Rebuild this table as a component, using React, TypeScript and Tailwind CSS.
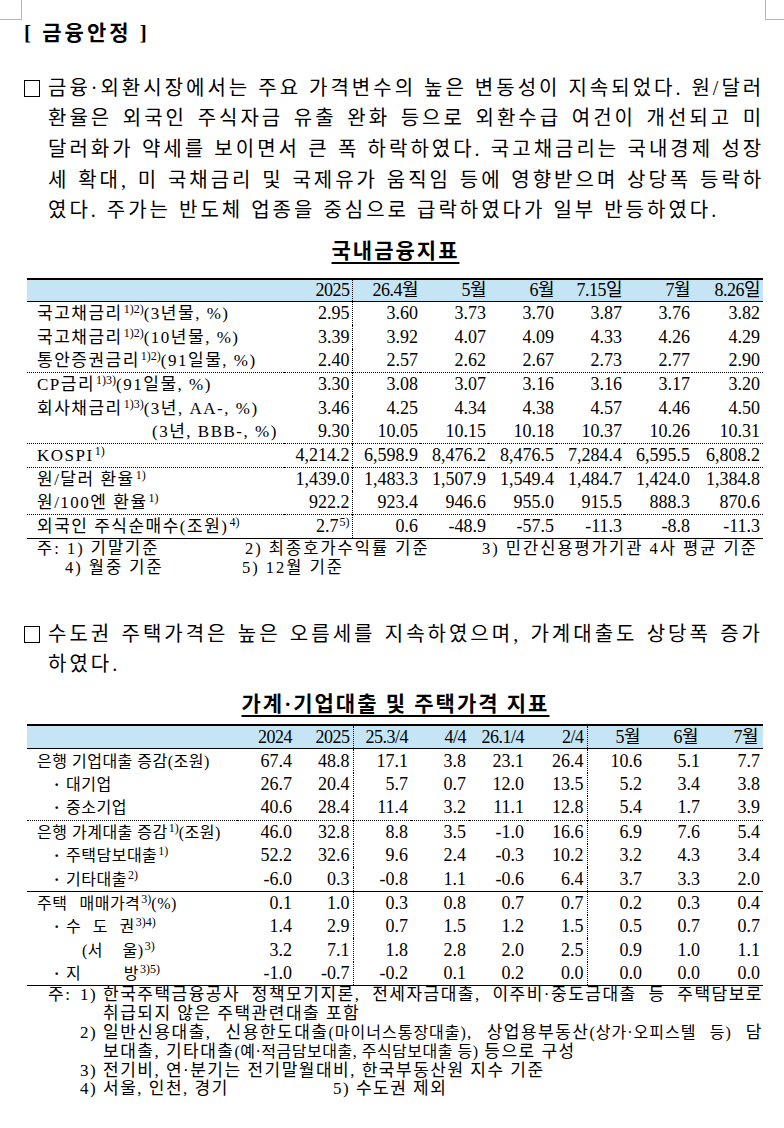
import React from 'react';

const Sup = ({ children }: { children: React.ReactNode }) => (
  <sup className="text-[12px] ml-[1px] tracking-[0px]">{children}</sup>
);

const JLine = ({ children, last }: { children: React.ReactNode; last?: boolean }) => (
  <div className={last ? 'whitespace-nowrap' : 'whitespace-nowrap text-justify [text-align-last:justify]'}>{children}</div>
);

const t1Head = ['2025', '26.4월', '5월', '6월', '7.15일', '7월', '8.26일'];

const t1Rows: { label: React.ReactNode; v: React.ReactNode[]; line?: 'dot' | 'solid' }[] = [
  { label: <>국고채금리<Sup>1)2)</Sup>(3년물, %)</>, v: ['2.95', '3.60', '3.73', '3.70', '3.87', '3.76', '3.82'] },
  { label: <>국고채금리<Sup>1)2)</Sup>(10년물, %)</>, v: ['3.39', '3.92', '4.07', '4.09', '4.33', '4.26', '4.29'] },
  { label: <>통안증권금리<Sup>1)2)</Sup>(91일물, %)</>, v: ['2.40', '2.57', '2.62', '2.67', '2.73', '2.77', '2.90'], line: 'dot' },
  { label: <>CP금리<Sup>1)3)</Sup>(91일물, %)</>, v: ['3.30', '3.08', '3.07', '3.16', '3.16', '3.17', '3.20'] },
  { label: <>회사채금리<Sup>1)3)</Sup>(3년, AA-, %)</>, v: ['3.46', '4.25', '4.34', '4.38', '4.57', '4.46', '4.50'] },
  { label: <span className="pl-[115px]">(3년, BBB-, %)</span>, v: ['9.30', '10.05', '10.15', '10.18', '10.37', '10.26', '10.31'], line: 'dot' },
  { label: <>KOSPI<Sup>1)</Sup></>, v: ['4,214.2', '6,598.9', '8,476.2', '8,476.5', '7,284.4', '6,595.5', '6,808.2'], line: 'dot' },
  { label: <>원/달러 환율<Sup>1)</Sup></>, v: ['1,439.0', '1,483.3', '1,507.9', '1,549.4', '1,484.7', '1,424.0', '1,384.8'] },
  { label: <>원/100엔 환율<Sup>1)</Sup></>, v: ['922.2', '923.4', '946.6', '955.0', '915.5', '888.3', '870.6'], line: 'dot' },
  { label: <>외국인 주식순매수(조원)<Sup>4)</Sup></>, v: [<>2.7<Sup>5)</Sup></>, '0.6', '-48.9', '-57.5', '-11.3', '-8.8', '-11.3'], line: 'solid' },
];

const t2Head = ['2024', '2025', '25.3/4', '4/4', '26.1/4', '2/4', '5월', '6월', '7월'];

const Dot = () => <span className="inline-block w-[12px] font-bold">·</span>;

const t2Rows: { label: React.ReactNode; v: string[]; line?: 'dot' | 'solid' }[] = [
  { label: <>은행 기업대출 증감(조원)</>, v: ['67.4', '48.8', '17.1', '3.8', '23.1', '26.4', '10.6', '5.1', '7.7'] },
  { label: <span className="pl-[17px]"><Dot />대기업</span>, v: ['26.7', '20.4', '5.7', '0.7', '12.0', '13.5', '5.2', '3.4', '3.8'] },
  { label: <span className="pl-[17px]"><Dot />중소기업</span>, v: ['40.6', '28.4', '11.4', '3.2', '11.1', '12.8', '5.4', '1.7', '3.9'], line: 'dot' },
  { label: <>은행 가계대출 증감<Sup>1)</Sup>(조원)</>, v: ['46.0', '32.8', '8.8', '3.5', '-1.0', '16.6', '6.9', '7.6', '5.4'] },
  { label: <span className="pl-[17px]"><Dot />주택담보대출<Sup>1)</Sup></span>, v: ['52.2', '32.6', '9.6', '2.4', '-0.3', '10.2', '3.2', '4.3', '3.4'] },
  { label: <span className="pl-[17px]"><Dot />기타대출<Sup>2)</Sup></span>, v: ['-6.0', '0.3', '-0.8', '1.1', '-0.6', '6.4', '3.7', '3.3', '2.0'], line: 'solid' },
  { label: <>주택<span className="inline-block w-[12px]" />매매가격<Sup>3)</Sup>(%)</>, v: ['0.1', '1.0', '0.3', '0.8', '0.7', '0.7', '0.2', '0.3', '0.4'] },
  { label: <span className="pl-[17px]"><Dot /><span className="tracking-[12px]">수도</span>권<Sup>3)4)</Sup></span>, v: ['1.4', '2.9', '0.7', '1.5', '1.2', '1.5', '0.5', '0.7', '0.7'] },
  { label: <span className="pl-[45px]">(<span className="tracking-[20px]">서</span>울)<Sup>3)</Sup></span>, v: ['3.2', '7.1', '1.8', '2.8', '2.0', '2.5', '0.9', '1.0', '1.1'] },
  { label: <span className="pl-[17px]"><Dot /><span className="tracking-[43px]">지</span>방<Sup>3)5)</Sup></span>, v: ['-1.0', '-0.7', '-0.2', '0.1', '0.2', '0.0', '0.0', '0.0', '0.0'], line: 'solid' },
];

const rowLine = (l?: 'dot' | 'solid') =>
  l === 'dot' ? 'border-b border-dotted border-black' : l === 'solid' ? 'border-b border-solid border-black' : '';

const App: React.FC = () => {
  return (
    <div className="relative w-[784px] h-[1128px] overflow-hidden bg-white text-black font-['Liberation_Serif','Noto_Sans_CJK_KR',serif]">
      {/* page margin marks */}
      <div className="absolute left-0 top-0 w-[22px] h-[20px] border-r border-b border-[#b5b5b5]" />
      <div className="absolute right-0 top-0 w-[19px] h-[20px] border-l border-b border-[#b5b5b5]" />

      <div className="pl-[22px] pr-[21px]">
        <div className="pt-[21px] text-[21px] font-bold leading-[24px] pl-[2px] tracking-[3px]">[ 금융안정 ]</div>

        <div className="mt-[27.6px] flex">
          <div className="w-[26px] pt-[7.5px] shrink-0">
            <div className="ml-[2px] w-[16px] h-[17px] border border-black" />
          </div>
          <div className="flex-1 text-[20px] leading-[30.7px] tracking-[3px]">
            <JLine>금융·외환시장에서는 주요 가격변수의 높은 변동성이 지속되었다. 원/달러</JLine>
            <JLine>환율은 외국인 주식자금 유출 완화 등으로 외환수급 여건이 개선되고 미</JLine>
            <JLine>달러화가 약세를 보이면서 큰 폭 하락하였다. 국고채금리는 국내경제 성장</JLine>
            <JLine>세 확대, 미 국채금리 및 국제유가 움직임 등에 영향받으며 상당폭 등락하</JLine>
            <JLine last>였다. 주가는 반도체 업종을 중심으로 급락하였다가 일부 반등하였다.</JLine>
          </div>
        </div>

        <div className="mt-[12.5px] pl-[6px] text-center text-[21px] font-bold leading-[24px] tracking-[2px]">
          <span className="underline underline-offset-[4px] decoration-[1.5px]">국내금융지표</span>
        </div>

        <table className="mt-[15px] ml-[5px] w-[736px] table-fixed border-collapse">
          <colgroup>
            <col className="w-[257px]" />
            <col className="w-[68px]" />
            <col className="w-[68px]" />
            <col className="w-[68px]" />
            <col className="w-[68px]" />
            <col className="w-[68px]" />
            <col className="w-[68px]" />
            <col className="w-[71px]" />
          </colgroup>
          <thead>
            <tr className="bg-[#c6e5f4] border-t-2 border-b border-solid border-black">
              <td className="h-[23px] p-0" />
              {t1Head.map((h, i) => (
                <td
                  key={h}
                  className={`h-[23px] p-0 pr-[2px] text-right text-[18px] leading-[20px] whitespace-nowrap tracking-[-0.5px] ${i === 0 ? 'border-r border-dotted border-black' : ''} ${i === 6 ? 'pr-[3px]' : ''}`}
                >
                  {h}
                </td>
              ))}
            </tr>
          </thead>
          <tbody>
            {t1Rows.map((r, ri) => (
              <tr key={ri} className={rowLine(r.line)}>
                <td className="h-[23.7px] p-0 pl-[10px] text-[17px] leading-[21px] tracking-[1.5px] whitespace-nowrap">{r.label}</td>
                {r.v.map((v, i) => (
                  <td
                    key={i}
                    className={`h-[23.7px] p-0 pr-[2px] text-right text-[18px] leading-[21px] whitespace-nowrap ${i === 0 ? 'border-r border-dotted border-black' : ''} ${i === 6 ? 'pr-[3px]' : ''}`}
                  >
                    {v}
                  </td>
                ))}
              </tr>
            ))}
          </tbody>
        </table>

        <div className="pl-[15px] text-[16.5px] leading-[19px] tracking-[2px] whitespace-nowrap">
          <div className="flex">
            <span className="w-[208px] shrink-0">주: 1) 기말기준</span>
            <span className="w-[237px] shrink-0">2) 최종호가수익률 기준</span>
            <span>3) 민간신용평가기관 4사 평균 기준</span>
          </div>
          <div className="flex pl-[28px]">
            <span className="w-[177px] shrink-0">4) 월중 기준</span>
            <span>5) 12월 기준</span>
          </div>
        </div>

        <div className="mt-[41.6px] flex">
          <div className="w-[26px] pt-[7.5px] shrink-0">
            <div className="ml-[2px] w-[16px] h-[17px] border border-black" />
          </div>
          <div className="flex-1 text-[20px] leading-[30.7px] tracking-[3px]">
            <JLine>수도권 주택가격은 높은 오름세를 지속하였으며, 가계대출도 상당폭 증가</JLine>
            <JLine last>하였다.</JLine>
          </div>
        </div>

        <div className="mt-[12px] pl-[6px] text-center text-[21px] font-bold leading-[24px] tracking-[2px]">
          <span className="underline underline-offset-[4px] decoration-[1.5px]">가계·기업대출 및 주택가격 지표</span>
        </div>

        <table className="mt-[8px] ml-[5px] w-[736px] table-fixed border-collapse">
          <colgroup>
            <col className="w-[210px]" />
            <col className="w-[58px]" />
            <col className="w-[58px]" />
            <col className="w-[58px]" />
            <col className="w-[58px]" />
            <col className="w-[58px]" />
            <col className="w-[60px]" />
            <col className="w-[58px]" />
            <col className="w-[58px]" />
            <col className="w-[60px]" />
          </colgroup>
          <thead>
            <tr className="bg-[#c6e5f4] border-t-2 border-b border-solid border-black">
              <td className="h-[24px] p-0" />
              {t2Head.map((h, i) => (
                <td
                  key={h}
                  className={`h-[24px] p-0 pr-[3px] text-right text-[18px] leading-[20px] whitespace-nowrap tracking-[-0.5px] ${i === 1 || i === 5 ? 'border-r border-dotted border-black' : ''} ${i >= 6 ? 'pr-[5px]' : ''}`}
                >
                  {h}
                </td>
              ))}
            </tr>
          </thead>
          <tbody>
            {t2Rows.map((r, ri) => (
              <tr key={ri} className={rowLine(r.line)}>
                <td className="h-[23.7px] p-0 pl-[10px] text-[16px] leading-[21px] tracking-[0.5px] whitespace-nowrap">{r.label}</td>
                {r.v.map((v, i) => (
                  <td
                    key={i}
                    className={`h-[23.7px] p-0 pr-[3px] text-right text-[18px] leading-[21px] whitespace-nowrap ${i === 1 || i === 5 ? 'border-r border-dotted border-black' : ''}`}
                  >
                    {v}
                  </td>
                ))}
              </tr>
            ))}
          </tbody>
        </table>

        <div className="pl-[26px] text-[17px] leading-[18.8px] tracking-[1.5px]">
          <div className="flex">
            <span className="w-[32px] shrink-0">주:</span>
            <span className="w-[23px] shrink-0">1)</span>
            <div className="flex-1">
              <JLine>한국주택금융공사 정책모기지론, 전세자금대출, 이주비·중도금대출 등 주택담보로</JLine>
              <JLine last>취급되지 않은 주택관련대출 포함</JLine>
            </div>
          </div>
          <div className="flex">
            <span className="w-[32px] shrink-0" />
            <span className="w-[23px] shrink-0">2)</span>
            <div className="flex-1">
              <JLine>
                일반신용대출, 신용한도대출<span className="text-[16px] tracking-[1px]">(마이너스통장대출)</span>, 상업용부동산<span className="text-[16px] tracking-[1px]">(상가·오피스텔 등)</span> 담
              </JLine>
              <JLine last>
                보대출, 기타대출<span className="text-[16px] tracking-[0.5px]">(예·적금담보대출, 주식담보대출 등)</span> 등으로 구성
              </JLine>
            </div>
          </div>
          <div className="flex">
            <span className="w-[32px] shrink-0" />
            <span className="w-[23px] shrink-0">3)</span>
            <div className="flex-1">
              <JLine last>전기비, 연·분기는 전기말월대비, 한국부동산원 지수 기준</JLine>
            </div>
          </div>
          <div className="flex">
            <span className="w-[32px] shrink-0" />
            <span className="w-[23px] shrink-0">4)</span>
            <div className="flex-1 whitespace-nowrap">
              <span className="inline-block w-[230px]">서울, 인천, 경기</span>
              <span>5) 수도권 제외</span>
            </div>
          </div>
        </div>
      </div>
    </div>
  );
};

export default App;
